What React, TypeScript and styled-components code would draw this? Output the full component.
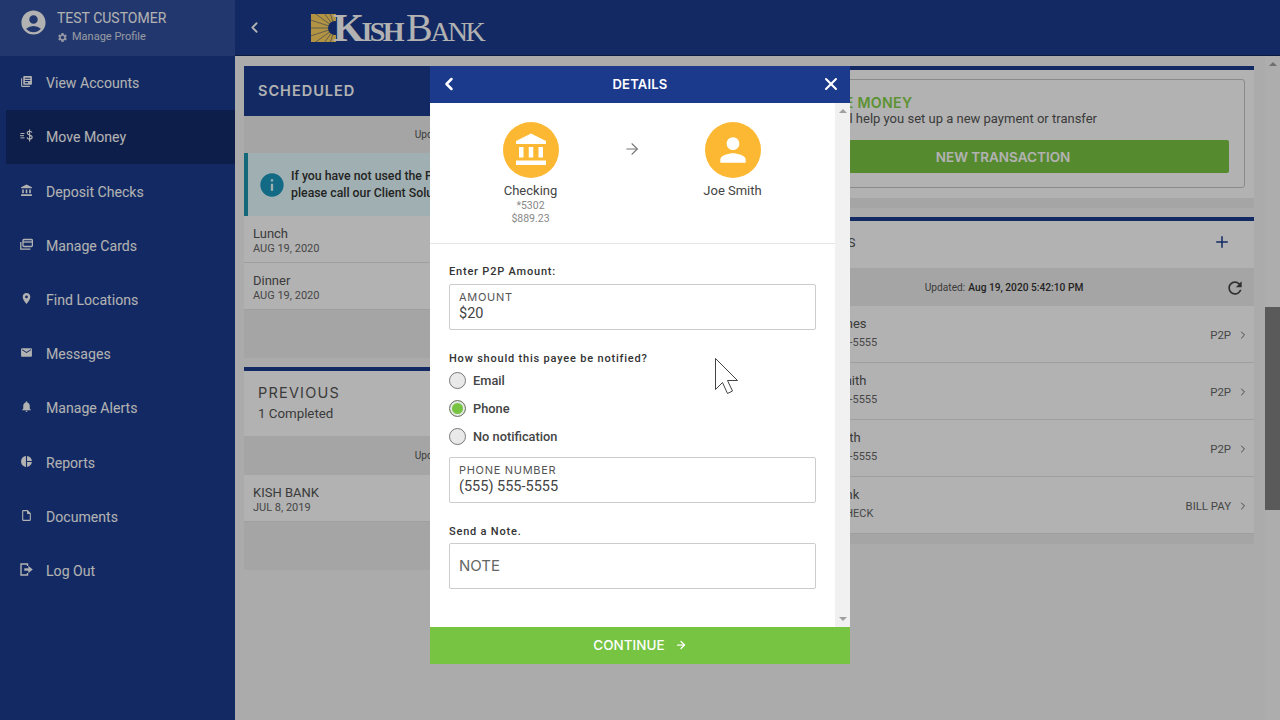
import React from 'react';
import styled, { createGlobalStyle } from 'styled-components';
import { ChevronLeft, ChevronRight, ArrowRight, X, Plus } from 'lucide-react';
import {
  MdAccountCircle,
  MdSettings,
  MdLibraryBooks,
  MdAccountBalance,
  MdPlace,
  MdEmail,
  MdNotifications,
  MdPieChart,
  MdOutlineInsertDriveFile,
  MdPerson,
  MdRefresh,
  MdInfo,
} from 'react-icons/md';

const GlobalStyle = createGlobalStyle`
  html, body {
    margin: 0;
    height: 100%;
    overflow: hidden;
    font-family: Roboto, "Liberation Sans", sans-serif;
  }
  * { box-sizing: border-box; }
`;

const heading = `Inter, "Open Sans", sans-serif`;

const Page = styled.div`
  position: relative;
  display: flex;
  width: 1280px;
  height: 720px;
  overflow: hidden;
  background: #f5f5f5;
`;

const Sidebar = styled.aside`
  flex: 0 0 235px;
  background: #1a3c8e;
  color: #fff;
`;

const Profile = styled.div`
  display: flex;
  align-items: flex-start;
  gap: 9px;
  height: 56px;
  padding: 8px 0 0 19px;
  background: #324f9c;
  font-size: 29px;
  line-height: 0;
`;

const ProfileName = styled.div`
  margin-top: 1px;
  font-size: 14px;
  line-height: 18px;
`;

const ManageProfile = styled.div`
  display: flex;
  align-items: center;
  gap: 4px;
  margin-top: 3px;
  font-size: 11px;
  line-height: 14px;
  opacity: 0.8;
`;

const NavItem = styled.div<{ $active?: boolean }>`
  display: flex;
  align-items: center;
  gap: 13px;
  height: 54.22px;
  margin-left: ${p => (p.$active ? '6px' : '0')};
  padding-left: ${p => (p.$active ? '14px' : '20px')};
  background: ${p => (p.$active ? '#142c6c' : 'transparent')};
  font-size: 14.1px;
  svg { flex: 0 0 13px; width: 13px; height: 13px; margin-top: -3px; }
`;

const Main = styled.div`
  flex: 1;
  display: flex;
  flex-direction: column;
  min-width: 0;
`;

const TopBar = styled.header`
  display: flex;
  align-items: center;
  height: 56px;
  padding-left: 11px;
  background: #1a3c8e;
  border-bottom: 1px solid #10265c;
  color: #fff;
`;

const Logo = styled.div`
  display: flex;
  align-items: center;
  margin-left: 48px;
  color: #fff;
  font-family: "Liberation Serif", serif;
  white-space: nowrap;
`;

const LogoWord = styled.span<{ $bold?: boolean }>`
  font-size: 40px;
  line-height: 40px;
  font-variant: small-caps;
  font-weight: ${p => (p.$bold ? 700 : 400)};
  letter-spacing: ${p => (p.$bold ? '-2.6px' : '-2.5px')};
  margin-left: ${p => (p.$bold ? '-3px' : '4px')};
`;

const Workspace = styled.div`
  flex: 1;
  display: flex;
  min-height: 0;
`;

const Columns = styled.main`
  flex: 1;
  display: grid;
  grid-template-columns: 500px 500px;
  gap: 10px;
  align-content: start;
  padding: 10px 0 0 9px;
`;

const Column = styled.div`
  display: flex;
  flex-direction: column;
  gap: 9px;
`;

const PageScrollbar = styled.div`
  flex: 0 0 15px;
  background: #f8f8f8;
  padding-top: 251px;
  position: relative;
`;

const PageThumb = styled.div`
  height: 203px;
  background: #818181;
`;

const ScrollArrowUp = styled.div`
  position: absolute;
  left: 4px;
  top: 6px;
  border: 4px solid transparent;
  border-top-width: 0;
  border-bottom: 4px solid #a0a0a0;
`;

const Panel = styled.section`
  display: flex;
  flex-direction: column;
`;

const DarkHeader = styled.div`
  display: flex;
  align-items: center;
  height: 50px;
  padding: 0 0 2px 14px;
  background: #1a3c8e;
  color: #fff;
  font-family: ${heading};
  font-size: 14.5px;
  font-weight: 600;
  letter-spacing: 1px;
`;

const StrapPanel = styled(Panel)`
  border-top: 4px solid #1a3c8e;
`;

const PreviousHead = styled.div`
  height: 65px;
  padding: 13px 0 0 14px;
  background: #fff;
`;

const PreviousTitle = styled.div`
  font-family: ${heading};
  font-size: 14.5px;
  letter-spacing: 1.2px;
  line-height: 18px;
  color: #555;
`;

const PreviousCount = styled.div`
  margin-top: 4px;
  font-size: 13.3px;
  color: #555;
`;

const UpdatedBar = styled.div<{ $height: number }>`
  position: relative;
  display: flex;
  align-items: center;
  justify-content: center;
  height: ${p => p.$height}px;
  background: #ececec;
  font-size: 10.2px;
  color: #555;
  b { font-weight: 500; color: #333; margin-left: 3px; }
  svg { position: absolute; right: 9px; top: 10px; color: #444; }
`;

const Alert = styled.div`
  display: flex;
  align-items: center;
  gap: 5px;
  height: 63px;
  padding-left: 12px;
  background: #e6fbff;
  border-left: 4px solid #1e95ae;
  color: #333;
  font-size: 12.3px;
  font-weight: 500;
  line-height: 17px;
  svg { flex: none; color: #1b98be; margin-left: -2px; }
`;

const Row = styled.div`
  display: flex;
  flex-direction: column;
  justify-content: center;
  height: 47px;
  padding: 3px 0 0 9px;
  background: #fff;
  border-bottom: 1px solid #e4e4e4;
`;

const RowTitle = styled.div`
  font-size: 13px;
  line-height: 16px;
  color: #555;
`;

const RowDate = styled.div`
  font-size: 11px;
  line-height: 14px;
  color: #666;
`;

const PanelFoot = styled.div<{ $height: number }>`
  height: ${p => p.$height}px;
  background: #ececec;
`;

const MoveCard = styled.div`
  height: 128px;
  padding: 9px 9px 10px 9px;
  background: #fff;
`;

const MoveBox = styled.div`
  height: 109px;
  padding: 14px 15px 0 13px;
  border: 1px solid #c8c8c8;
  border-radius: 3px;
`;

const MoveTitle = styled.div`
  padding-left: 33px;
  font-family: ${heading};
  font-size: 14.2px;
  font-weight: 600;
  line-height: 17px;
  letter-spacing: 0.3px;
  color: #86d24a;
`;

const MoveText = styled.div`
  padding-left: 3px;
  font-size: 13px;
  line-height: 16px;
  color: #555;
`;

const NewTransaction = styled.div`
  display: flex;
  align-items: center;
  justify-content: center;
  height: 33px;
  margin-top: 13px;
  border-radius: 2px;
  background: #7cc644;
  color: #fff;
  font-family: ${heading};
  font-size: 13.5px;
  font-weight: 600;
`;

const PayeesHead = styled.div`
  display: flex;
  align-items: center;
  justify-content: space-between;
  height: 47px;
  padding: 0 23px 5px 56px;
  background: #fff;
  font-size: 13px;
  color: #555;
  svg { color: #1a3c8e; }
`;

const PayeeRow = styled.div`
  display: flex;
  align-items: center;
  justify-content: space-between;
  height: 57px;
  padding: 0 5px 0 48px;
  background: #fff;
  border-bottom: 1px solid #e4e4e4;
`;

const PayeeName = styled.div`
  font-size: 13px;
  line-height: 18px;
  color: #555;
`;

const PayeeSub = styled.div`
  font-size: 11px;
  line-height: 20px;
  color: #666;
`;

const PayeeType = styled.div`
  display: flex;
  align-items: center;
  gap: 6px;
  padding-top: 1px;
  font-size: 11.4px;
  color: #666;
`;

const Overlay = styled.div`
  position: absolute;
  inset: 0;
  display: flex;
  justify-content: center;
  padding-top: 66px;
  background: rgba(0, 0, 0, 0.3);
`;

const Modal = styled.div`
  display: flex;
  flex-direction: column;
  width: 420px;
  height: 598px;
  background: #fff;
`;

const ModalHeader = styled.div`
  display: flex;
  align-items: center;
  justify-content: space-between;
  height: 37px;
  padding: 0 9px 2px;
  background: #1c3a8c;
  color: #fff;
`;

const ModalTitle = styled.div`
  font-family: ${heading};
  font-size: 13px;
  font-weight: 600;
  letter-spacing: 0.2px;
`;

const ModalBody = styled.div`
  flex: 1;
  display: flex;
  min-height: 0;
`;

const ModalContent = styled.div`
  flex: 1;
`;

const ModalScrollbar = styled.div`
  position: relative;
  flex: 0 0 15px;
  background: #f1f1f1;
`;

const ScrollArrowDown = styled.div`
  position: absolute;
  left: 4px;
  bottom: 6px;
  border: 4px solid transparent;
  border-bottom-width: 0;
  border-top: 4px solid #a0a0a0;
`;

const Parties = styled.div`
  display: grid;
  grid-template-columns: repeat(3, 101px);
  justify-content: center;
  height: 141px;
  padding: 19px 2px 0 0;
  border-bottom: 1px solid #e6e6e6;
`;

const Party = styled.div`
  display: flex;
  flex-direction: column;
  align-items: center;
  text-align: center;
`;

const PartyCircle = styled.div`
  display: flex;
  align-items: center;
  justify-content: center;
  width: 56px;
  height: 56px;
  margin-bottom: 4px;
  border-radius: 50%;
  background: #fdb833;
  color: #fff;
`;

const PartyArrow = styled.div`
  display: flex;
  justify-content: center;
  padding-top: 18px;
  color: #777;
`;

const PartyName = styled.div`
  font-size: 13px;
  line-height: 17px;
  color: #444;
`;

const PartySub = styled.div`
  font-size: 10.5px;
  line-height: 13px;
  color: #888;
`;

const Form = styled.div`
  padding: 21px 19px 0;
`;

const FormLabel = styled.div<{ $top?: number; $bottom?: number }>`
  margin-top: ${p => p.$top ?? 0}px;
  margin-bottom: ${p => p.$bottom ?? 5}px;
  font-size: 11px;
  font-weight: 500;
  line-height: 14px;
  letter-spacing: 0.8px;
  color: #333;
`;

const Field = styled.div`
  display: flex;
  flex-direction: column;
  justify-content: center;
  height: 46px;
  padding: 0 0 2px 9px;
  border: 1px solid #ccc;
  border-radius: 2px;
`;

const FieldCaption = styled.div`
  margin-bottom: 2px;
  font-family: ${heading};
  font-size: 11px;
  line-height: 14px;
  letter-spacing: 0.7px;
  color: #555;
`;

const FieldValue = styled.div`
  font-size: 14.5px;
  line-height: 16px;
  color: #444;
`;

const FieldPlaceholder = styled.div`
  font-family: ${heading};
  font-size: 15px;
  color: #666;
`;

const RadioGroup = styled.div`
  margin-bottom: 7px;
`;

const RadioRow = styled.div`
  display: flex;
  align-items: center;
  gap: 7px;
  height: 28px;
  font-size: 12.8px;
  font-weight: 500;
  color: #444;
`;

const RadioMark = styled.div<{ $on?: boolean }>`
  width: 17px;
  height: 17px;
  border-radius: 50%;
  border: 1px solid #777;
  background: ${p => (p.$on ? '#76c442' : '#e9e9e9')};
  box-shadow: ${p => (p.$on ? 'inset 0 0 0 2px #e9e9e9' : 'none')};
`;

const ContinueButton = styled.div`
  display: flex;
  align-items: center;
  justify-content: center;
  gap: 10px;
  height: 37px;
  padding-bottom: 2px;
  background: #76c442;
  color: #fff;
  font-family: ${heading};
  font-size: 13.5px;
  font-weight: 500;
`;

const Pointer = styled.svg`
  position: absolute;
  left: 714px;
  top: 357px;
`;

const MoveMoneyIcon = () => (
  <svg viewBox="0 0 13 13" fill="none" stroke="currentColor">
    <path d="M0.5 4.5h4M0 6.7h4M0.5 8.9h4" strokeWidth="1" />
    <path
      d="M12 3.6c-.4-1-1.2-1.4-2.4-1.4-1.4 0-2.4.7-2.4 1.9 0 2.7 5 1.3 5 4 0 1.2-1.1 2-2.6 2-1.3 0-2.2-.6-2.6-1.6M9.6.6v11.8"
      strokeWidth="1.1"
    />
  </svg>
);

const CardsIcon = () => (
  <svg viewBox="0 0 13 13" fill="none" stroke="currentColor" strokeWidth="1.3">
    <rect x="3" y="1.5" width="9.4" height="7" rx="1" />
    <path d="M3 4h9.4" />
    <path d="M.8 4v7.2h9.6" />
  </svg>
);

const LogOutIcon = () => (
  <svg viewBox="0 0 13 13" fill="none" stroke="currentColor">
    <path d="M7.5 3V1H1v11h6.5v-2" strokeWidth="1.4" />
    <path d="M4.5 5.5h4V3.2l4 3.3-4 3.3V7.5h-4z" fill="currentColor" strokeWidth="0.4" />
  </svg>
);

const LogoMark = () => {
  const rays = Array.from({ length: 9 }, (_, i) => (-72 + i * 18) * (Math.PI / 180));
  return (
    <svg width="25" height="28" viewBox="0 0 25 28">
      <rect width="25" height="28" fill="#ffd35e" />
      {rays.map(a => (
        <line
          key={a}
          x1={24}
          y1={14}
          x2={24 - 32 * Math.cos(a)}
          y2={14 + 32 * Math.sin(a)}
          stroke="#1a3c8e"
          strokeWidth="0.5"
        />
      ))}
      <circle cx="24" cy="14" r="7" fill="#1a3c8e" />
    </svg>
  );
};

const navItems = [
  { label: 'View Accounts', icon: <MdLibraryBooks /> },
  { label: 'Move Money', icon: <MoveMoneyIcon />, active: true },
  { label: 'Deposit Checks', icon: <MdAccountBalance /> },
  { label: 'Manage Cards', icon: <CardsIcon /> },
  { label: 'Find Locations', icon: <MdPlace /> },
  { label: 'Messages', icon: <MdEmail /> },
  { label: 'Manage Alerts', icon: <MdNotifications /> },
  { label: 'Reports', icon: <MdPieChart /> },
  { label: 'Documents', icon: <MdOutlineInsertDriveFile /> },
  { label: 'Log Out', icon: <LogOutIcon /> },
];

const payees = [
  { name: 'Tom Jones', sub: '(555) 555-5555', type: 'P2P' },
  { name: 'Jess Smith', sub: '(555) 555-5555', type: 'P2P' },
  { name: 'Jim Smith', sub: '(555) 555-5555', type: 'P2P' },
  { name: 'Kish Bank', sub: 'PAPER CHECK', type: 'BILL PAY' },
];

const updated = (
  <>
    Updated:<b>Aug 19, 2020 5:42:10 PM</b>
  </>
);

const App: React.FC = () => {
  return (
    <Page>
      <GlobalStyle />
      <Sidebar>
        <Profile>
          <MdAccountCircle />
          <div>
            <ProfileName>TEST CUSTOMER</ProfileName>
            <ManageProfile>
              <MdSettings size={11} />
              Manage Profile
            </ManageProfile>
          </div>
        </Profile>
        {navItems.map(item => (
          <NavItem key={item.label} $active={item.active}>
            {item.icon}
            {item.label}
          </NavItem>
        ))}
      </Sidebar>

      <Main>
        <TopBar>
          <ChevronLeft size={17} strokeWidth={2.5} />
          <Logo>
            <LogoMark />
            <LogoWord $bold>Kish</LogoWord>
            <LogoWord>Bank</LogoWord>
          </Logo>
        </TopBar>

        <Workspace>
          <Columns>
            <Column>
              <Panel>
                <DarkHeader>SCHEDULED</DarkHeader>
                <UpdatedBar $height={37}>{updated}</UpdatedBar>
                <Alert>
                  <MdInfo size={28} />
                  <div>
                    If you have not used the P2P service recently,
                    <br />
                    please call our Client Solutions team.
                  </div>
                </Alert>
                <Row>
                  <RowTitle>Lunch</RowTitle>
                  <RowDate>AUG 19, 2020</RowDate>
                </Row>
                <Row>
                  <RowTitle>Dinner</RowTitle>
                  <RowDate>AUG 19, 2020</RowDate>
                </Row>
                <PanelFoot $height={48} />
              </Panel>
              <StrapPanel>
                <PreviousHead>
                  <PreviousTitle>PREVIOUS</PreviousTitle>
                  <PreviousCount>1 Completed</PreviousCount>
                </PreviousHead>
                <UpdatedBar $height={39}>{updated}</UpdatedBar>
                <Row>
                  <RowTitle>KISH BANK</RowTitle>
                  <RowDate>JUL 8, 2019</RowDate>
                </Row>
                <PanelFoot $height={48} />
              </StrapPanel>
            </Column>

            <Column>
              <StrapPanel>
                <MoveCard>
                  <MoveBox>
                    <MoveTitle>MOVE MONEY</MoveTitle>
                    <MoveText>This tool will help you set up a new payment or transfer</MoveText>
                    <NewTransaction>NEW TRANSACTION</NewTransaction>
                  </MoveBox>
                </MoveCard>
                <PanelFoot $height={10} />
              </StrapPanel>
              <StrapPanel>
                <PayeesHead>
                  PAYEES
                  <Plus size={18} strokeWidth={2} />
                </PayeesHead>
                <UpdatedBar $height={38}>
                  {updated}
                  <MdRefresh size={20} />
                </UpdatedBar>
                {payees.map(p => (
                  <PayeeRow key={p.name}>
                    <div>
                      <PayeeName>{p.name}</PayeeName>
                      <PayeeSub>{p.sub}</PayeeSub>
                    </div>
                    <PayeeType>
                      {p.type}
                      <ChevronRight size={12} strokeWidth={2} />
                    </PayeeType>
                  </PayeeRow>
                ))}
                <PanelFoot $height={10} />
              </StrapPanel>
            </Column>
          </Columns>
          <PageScrollbar>
            <ScrollArrowUp />
            <PageThumb />
          </PageScrollbar>
        </Workspace>
      </Main>

      <Overlay>
        <Modal>
          <ModalHeader>
            <ChevronLeft size={20} strokeWidth={3} />
            <ModalTitle>DETAILS</ModalTitle>
            <X size={20} strokeWidth={2.5} />
          </ModalHeader>
          <ModalBody>
            <ModalContent>
              <Parties>
                <Party>
                  <PartyCircle>
                    <MdAccountBalance size={36} />
                  </PartyCircle>
                  <PartyName>Checking</PartyName>
                  <PartySub>*5302</PartySub>
                  <PartySub>$889.23</PartySub>
                </Party>
                <PartyArrow>
                  <ArrowRight size={18} strokeWidth={1.5} />
                </PartyArrow>
                <Party>
                  <PartyCircle>
                    <MdPerson size={38} />
                  </PartyCircle>
                  <PartyName>Joe Smith</PartyName>
                </Party>
              </Parties>
              <Form>
                <FormLabel>Enter P2P Amount:</FormLabel>
                <Field>
                  <FieldCaption>AMOUNT</FieldCaption>
                  <FieldValue>$20</FieldValue>
                </Field>
                <FormLabel $top={22} $bottom={0}>
                  How should this payee be notified?
                </FormLabel>
                <RadioGroup>
                  <RadioRow>
                    <RadioMark />
                    Email
                  </RadioRow>
                  <RadioRow>
                    <RadioMark $on />
                    Phone
                  </RadioRow>
                  <RadioRow>
                    <RadioMark />
                    No notification
                  </RadioRow>
                </RadioGroup>
                <Field>
                  <FieldCaption>PHONE NUMBER</FieldCaption>
                  <FieldValue>(555) 555-5555</FieldValue>
                </Field>
                <FormLabel $top={22} $bottom={4}>
                  Send a Note.
                </FormLabel>
                <Field>
                  <FieldPlaceholder>NOTE</FieldPlaceholder>
                </Field>
              </Form>
            </ModalContent>
            <ModalScrollbar>
              <ScrollArrowUp />
              <ScrollArrowDown />
            </ModalScrollbar>
          </ModalBody>
          <ContinueButton>
            CONTINUE
            <ArrowRight size={12} strokeWidth={2.5} />
          </ContinueButton>
        </Modal>
        <Pointer width="26" height="38" viewBox="0 0 26 38">
          <path
            d="M1.5 1.5v31l7-7 5 11 5-2.5-5-10.5h10z"
            fill="#fff"
            stroke="#444"
            strokeWidth="1"
          />
        </Pointer>
      </Overlay>
    </Page>
  );
};

export default App;
